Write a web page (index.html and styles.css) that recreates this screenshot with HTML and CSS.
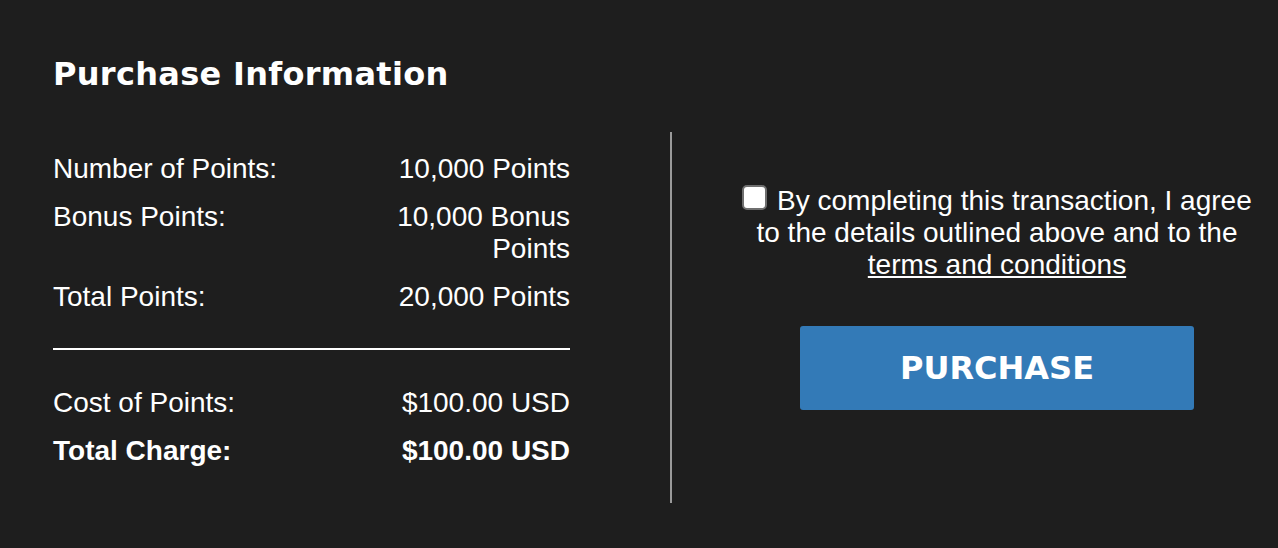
FILE: index.html
```html
<!DOCTYPE html>
<html>

<head>
    <meta charset="UTF-8">
    <title>Purchase Information</title>
    <link rel="stylesheet" href="styles.css">
</head>

<body>
    <div class="page">
        <h1>Purchase Information</h1>

        <div class="panel">
            <div class="summary">
                <div class="row">
                    <span class="label">Number of Points:</span>
                    <span class="value">10,000 Points</span>
                </div>
                <div class="row">
                    <span class="label">Bonus Points:</span>
                    <span class="value">10,000 Bonus Points</span>
                </div>
                <div class="row">
                    <span class="label">Total Points:</span>
                    <span class="value">20,000 Points</span>
                </div>

                <hr class="rule">

                <div class="row">
                    <span class="label">Cost of Points:</span>
                    <span class="value">$100.00 USD</span>
                </div>
                <div class="row total">
                    <span class="label">Total Charge:</span>
                    <span class="value">$100.00 USD</span>
                </div>
            </div>

            <div class="divider"></div>

            <div class="agree">
                <label class="agree-text">
                    <input type="checkbox" class="check"> By completing this transaction, I agree to the details
                    outlined above and to the <a href="#">terms and conditions</a>
                </label>
                <button class="purchase-btn">PURCHASE</button>
            </div>
        </div>
    </div>
</body>

</html>
```

FILE: styles.css
```css
body {
    margin: 0;
    padding: 0;
    background: #1e1e1e;
    color: #fff;
    font-family: 'Liberation Sans', Arial, sans-serif;
    width: 1278px;
    height: 548px;
    overflow: hidden;
}

.page {
    padding: 54px 0 0 53px;
}

h1 {
    font-family: 'DejaVu Sans', sans-serif;
    font-size: 32px;
    font-weight: 700;
    line-height: 40px;
    letter-spacing: 0.3px;
    margin: 0;
}

.panel {
    display: flex;
    margin-top: 38px;
}

.summary {
    width: 517px;
    padding: 21px 0 36px;
    font-size: 28px;
    line-height: 32px;
}

.row {
    display: flex;
    justify-content: space-between;
    margin-bottom: 16px;
}

.row:last-child {
    margin-bottom: 0;
}

.value {
    width: 180px;
    text-align: right;
}

.total {
    font-weight: 700;
}

.rule {
    border: none;
    height: 2px;
    background: #fff;
    margin: 35px 0 37px;
}

.divider {
    width: 2px;
    background: #9a9a9a;
    margin-left: 100px;
}

.agree {
    flex: 1;
    padding: 53px 0 0 44px;
    display: flex;
    flex-direction: column;
    align-items: center;
}

.agree-text {
    display: block;
    max-width: 520px;
    text-align: center;
    font-size: 28px;
    line-height: 32px;
}

.agree-text a {
    color: #fff;
}

.check {
    appearance: none;
    -webkit-appearance: none;
    width: 25px;
    height: 25px;
    margin: 0 2px 0 0;
    background: #fff;
    border: 2px solid #6f6f6f;
    border-radius: 5px;
    box-sizing: border-box;
    vertical-align: baseline;
}

.purchase-btn {
    margin-top: 45px;
    width: 394px;
    height: 84px;
    background: #337ab7;
    color: #fff;
    border: none;
    border-radius: 3px;
    font-family: 'DejaVu Sans', sans-serif;
    font-size: 32px;
    font-weight: 700;
    cursor: pointer;
}
```
